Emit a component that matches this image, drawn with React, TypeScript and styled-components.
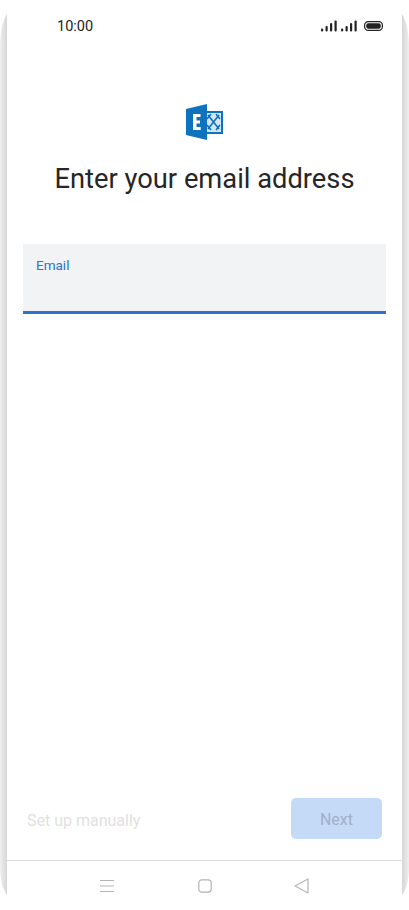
import { createGlobalStyle } from "styled-components";
import styled from "styled-components";

const GlobalStyle = createGlobalStyle`
  html, body {
    margin: 0;
    padding: 0;
    background: #fff;
    font-family: Roboto, "Liberation Sans", sans-serif;
  }
`;

const Phone = styled.div`
  position: relative;
  display: flex;
  flex-direction: column;
  width: 409px;
  height: 910px;
  overflow: hidden;
  background: #fff;
`;

const Bezel = styled.svg`
  position: absolute;
  top: 0;
  left: 0;
  pointer-events: none;
`;

const StatusBar = styled.div`
  display: flex;
  align-items: center;
  justify-content: space-between;
  height: 52px;
  padding: 0 26px 0 57px;
  box-sizing: border-box;
`;

const Time = styled.span`
  font-size: 14.5px;
  color: #222;
`;

const StatusIcons = styled.div`
  display: flex;
  align-items: center;
  gap: 4px;
`;

const BatteryIcon = styled.svg`
  margin-left: 3px;
`;

const Content = styled.main`
  flex: 1;
  display: flex;
  flex-direction: column;
  align-items: center;
  padding: 52px 23px 0;
`;

const Title = styled.h1`
  margin: 21px 0 47px;
  font-size: 27.3px;
  line-height: 36px;
  font-weight: 400;
  color: #262626;
  white-space: nowrap;
`;

const Field = styled.div`
  align-self: stretch;
  height: 70px;
  box-sizing: border-box;
  padding: 13px 13px 0;
  background: #f1f3f5;
  border-bottom: 3px solid #2f72c9;
`;

const FieldLabel = styled.label`
  display: block;
  font-size: 13.5px;
  line-height: 16px;
  color: #2f72c9;
`;

const Footer = styled.div`
  display: flex;
  align-items: center;
  justify-content: space-between;
  padding: 0 27px;
  height: 41px;
  margin-bottom: 21px;
`;

const ManualLink = styled.span`
  padding-top: 3px;
  font-size: 16px;
  color: #e1e1e1;
`;

const NextButton = styled.button`
  width: 91px;
  height: 41px;
  padding: 2px 0 0;
  border: 0;
  border-radius: 5px;
  background: #c5daf6;
  color: #9fb0c9;
  font-family: inherit;
  font-size: 16px;
`;

const NavBar = styled.nav`
  display: grid;
  grid-template-columns: repeat(3, 97px);
  justify-content: center;
  align-items: center;
  height: 49px;
  border-top: 1px solid #ddd;
`;

const NavSlot = styled.div`
  display: flex;
  justify-content: center;
`;

const Signal = () => (
  <svg width="16" height="12" viewBox="0 0 16 12" fill="#222">
    <rect x="0" y="8.5" width="2.2" height="3" rx="1" />
    <rect x="4.5" y="6" width="2.2" height="5.5" rx="1" />
    <rect x="9" y="3" width="2.2" height="8.5" rx="1" />
    <rect x="13.5" y="0.5" width="2.2" height="11" rx="1" />
  </svg>
);

const Battery = () => (
  <BatteryIcon width="19" height="10" viewBox="0 0 19 10">
    <rect x="0.6" y="0.6" width="17.8" height="8.8" rx="3.6" fill="none" stroke="#222" strokeWidth="1.2" />
    <rect x="2.2" y="2.2" width="14.6" height="5.6" rx="2.2" fill="#222" />
  </BatteryIcon>
);

const ExchangeLogo = () => (
  <svg width="37" height="36" viewBox="0 0 37 36">
    <rect x="18" y="8" width="18" height="21" fill="#d5e6f4" stroke="#0f72bd" strokeWidth="2" />
    <path
      d="M22 11 L33 25 M33 11 L22 25 M25 10 L21 15 M30 10 L34 15 M25 26 L21 21 M30 26 L34 21"
      fill="none"
      stroke="#0f72bd"
      strokeWidth="1.6"
    />
    <path d="M0 5 L21 0 V36 L0 31 Z" fill="#0f72bd" />
    <path d="M7 10 H14.5 V13 H10.5 V16.4 H14 V19.4 H10.5 V23 H14.7 V26 H7 Z" fill="#fff" />
  </svg>
);

const App = () => (
  <Phone>
    <GlobalStyle />
    <Bezel width="409" height="910" viewBox="0 0 409 910">
      <defs>
        <linearGradient id="bezelLeft" x1="0" x2="1" y1="0" y2="0">
          <stop offset="0" stopColor="#efefef" />
          <stop offset="1" stopColor="#d6d6d6" />
        </linearGradient>
        <linearGradient id="bezelRight" x1="1" x2="0" y1="0" y2="0">
          <stop offset="0" stopColor="#efefef" />
          <stop offset="1" stopColor="#d6d6d6" />
        </linearGradient>
      </defs>
      <path d="M7 14 C2 22 0 34 0 48 V868 C0 880 3 890 7 895 Z" fill="url(#bezelLeft)" />
      <path d="M402 14 C407 22 409 34 409 48 V868 C409 880 406 890 402 895 Z" fill="url(#bezelRight)" />
    </Bezel>
    <StatusBar>
      <Time>10:00</Time>
      <StatusIcons>
        <Signal />
        <Signal />
        <Battery />
      </StatusIcons>
    </StatusBar>
    <Content>
      <ExchangeLogo />
      <Title>Enter your email address</Title>
      <Field>
        <FieldLabel>Email</FieldLabel>
      </Field>
    </Content>
    <Footer>
      <ManualLink>Set up manually</ManualLink>
      <NextButton>Next</NextButton>
    </Footer>
    <NavBar>
      <NavSlot>
        <svg width="16" height="14" viewBox="0 0 16 14" fill="none" stroke="#b5b5b5" strokeWidth="1.2">
          <path d="M0 1.5 H14 M0 7 H14 M0 12.5 H14" />
        </svg>
      </NavSlot>
      <NavSlot>
        <svg width="14" height="14" viewBox="0 0 14 14" fill="none" stroke="#b5b5b5" strokeWidth="1.2">
          <rect x="0.8" y="0.8" width="12.4" height="12.4" rx="3" />
        </svg>
      </NavSlot>
      <NavSlot>
        <svg width="15" height="16" viewBox="0 0 15 16" fill="none" stroke="#b5b5b5" strokeWidth="1.2" strokeLinejoin="round">
          <path d="M14 1 V15 L1 8 Z" />
        </svg>
      </NavSlot>
    </NavBar>
  </Phone>
);

export default App;
